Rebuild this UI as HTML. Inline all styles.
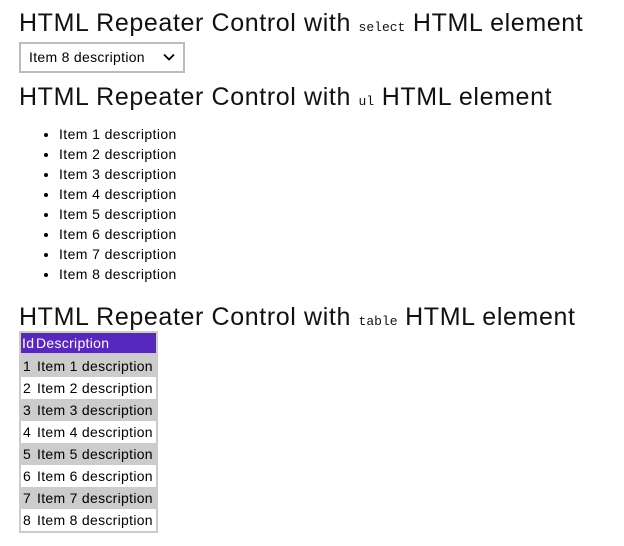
<!DOCTYPE html>
<html><head><style>
body{margin:0;background:#fff;font-family:"Liberation Sans",sans-serif;color:#000;width:624px;height:546px;overflow:hidden;position:relative}
.h{position:absolute;left:19px;font-size:25px;font-weight:300;white-space:nowrap;line-height:30px;letter-spacing:0.62px;color:#111}
.h code{font-family:"Liberation Mono",monospace;font-size:13px;letter-spacing:0}
.sel{position:absolute;left:19px;top:42px;width:162px;height:27px;border:2px solid #bbb;box-sizing:content-box;font-size:14px;line-height:27px;letter-spacing:0.3px}
.sel span{position:absolute;left:8px}
.sel svg{position:absolute;left:142px;top:9px}
ul{position:absolute;left:0;top:124px;margin:0;padding-left:59px;font-size:14px;line-height:20px;letter-spacing:0.4px}
table{position:absolute;left:19px;top:331px;border:2px solid #ccc;border-collapse:collapse;font-size:14px;width:139px;letter-spacing:0.3px}
td,th{padding:0 0 0 2px;height:22px;white-space:nowrap;text-align:left;font-weight:normal}
th{background:#5628c0;color:#fff;height:20px;border-bottom:2px solid #ccc;padding-left:1px}
tr.g td{background:#ccc}
td:first-child{width:12px}
</style></head><body>
<div class="h" style="top:8px">HTML Repeater Control with <code>select</code> HTML element</div>
<div class="sel"><span>Item 8 description</span><svg width="12" height="8" viewBox="0 0 12 8"><path d="M1 1.5L6 6.5L11 1.5" fill="none" stroke="#000" stroke-width="1.8"/></svg></div>
<div class="h" style="top:82px">HTML Repeater Control with <code>ul</code> HTML element</div>
<ul>
<li>Item 1 description</li><li>Item 2 description</li><li>Item 3 description</li><li>Item 4 description</li><li>Item 5 description</li><li>Item 6 description</li><li>Item 7 description</li><li>Item 8 description</li>
</ul>
<div class="h" style="top:302px">HTML Repeater Control with <code>table</code> HTML element</div>
<table>
<tr><th>Id</th><th>Description</th></tr>
<tr class="g"><td>1</td><td>Item 1 description</td></tr>
<tr><td>2</td><td>Item 2 description</td></tr>
<tr class="g"><td>3</td><td>Item 3 description</td></tr>
<tr><td>4</td><td>Item 4 description</td></tr>
<tr class="g"><td>5</td><td>Item 5 description</td></tr>
<tr><td>6</td><td>Item 6 description</td></tr>
<tr class="g"><td>7</td><td>Item 7 description</td></tr>
<tr><td>8</td><td>Item 8 description</td></tr>
</table>
</body></html>
